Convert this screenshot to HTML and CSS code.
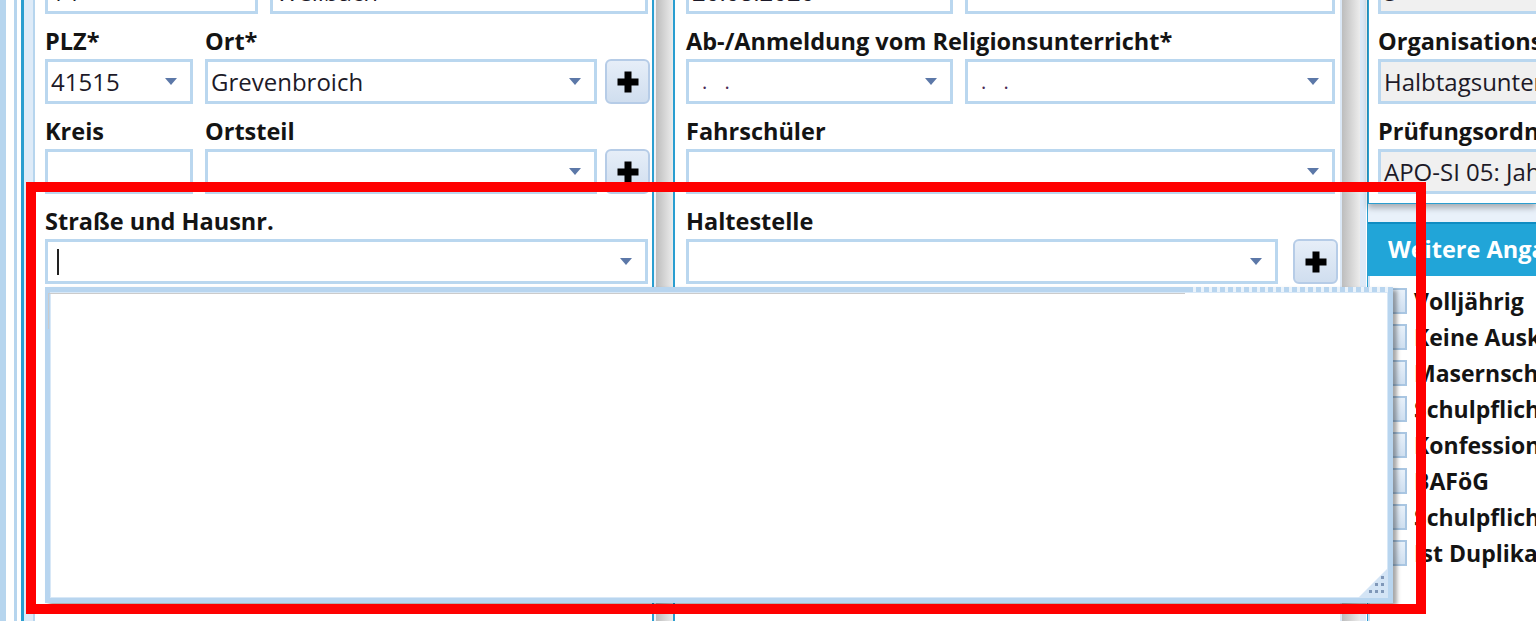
FILE: index.html
```html
<!DOCTYPE html>
<html lang="de">
<head>
<meta charset="utf-8">
<title>Schüler</title>
<link rel="stylesheet" href="styles.css">
</head>
<body>
<div class="app">
  <div class="edge"></div>

  <div class="panel left">
    <div class="stack">
      <div class="row">
        <div class="field w213"><span class="val">14</span></div>
        <div class="field w378"><span class="val">Weilbach</span></div>
      </div>
      <div class="lblrow"><span class="lbl w148">PLZ*</span><span class="lbl">Ort*</span></div>
      <div class="row">
        <div class="field w148"><span class="val">41515</span><i class="arrow"></i></div>
        <div class="field w392"><span class="val">Grevenbroich</span><i class="arrow"></i></div>
        <button class="plus"><svg viewBox="0 0 24 24" width="24" height="24"><path d="M8.5 1.5h7v7h7v7h-7v7h-7v-7h-7v-7h7z"/></svg></button>
      </div>
      <div class="lblrow"><span class="lbl w148">Kreis</span><span class="lbl">Ortsteil</span></div>
      <div class="row">
        <div class="field w148"></div>
        <div class="field w392"><i class="arrow"></i></div>
        <button class="plus"><svg viewBox="0 0 24 24" width="24" height="24"><path d="M8.5 1.5h7v7h7v7h-7v7h-7v-7h-7v-7h7z"/></svg></button>
      </div>
      <div class="lblrow"><span class="lbl">Straße und Hausnr.</span></div>
      <div class="row">
        <div class="field w603"><span class="caret"></span><i class="arrow"></i></div>
      </div>
    </div>
  </div>

  <div class="sep"></div>

  <div class="panel mid">
    <div class="stack">
      <div class="row">
        <div class="field w267"><span class="val">20.08.2020</span></div>
        <div class="field w370"><span class="val dots">. .</span></div>
      </div>
      <div class="lblrow"><span class="lbl">Ab-/Anmeldung vom Religionsunterricht*</span></div>
      <div class="row">
        <div class="field w267"><span class="val dots">. .</span><i class="arrow"></i></div>
        <div class="field w370"><span class="val dots">. .</span><i class="arrow"></i></div>
      </div>
      <div class="lblrow"><span class="lbl">Fahrschüler</span></div>
      <div class="row">
        <div class="field w649"><i class="arrow"></i></div>
      </div>
      <div class="lblrow"><span class="lbl">Haltestelle</span></div>
      <div class="row">
        <div class="field w592"><i class="arrow"></i></div>
        <button class="plus plus-r"><svg viewBox="0 0 24 24" width="24" height="24"><path d="M8.5 1.5h7v7h7v7h-7v7h-7v-7h-7v-7h7z"/></svg></button>
      </div>
    </div>
  </div>

  <div class="sep2"></div>

  <div class="panel right">
    <div class="rbox">
      <div class="row">
        <div class="field ro wfull"><span class="val">5</span></div>
      </div>
      <div class="lblrow"><span class="lbl">Organisationsform</span></div>
      <div class="row">
        <div class="field ro wfull"><span class="val">Halbtagsunterricht</span></div>
      </div>
      <div class="lblrow"><span class="lbl">Prüfungsordnung</span></div>
      <div class="row">
        <div class="field ro wfull"><span class="val">APO-SI 05: Jahrgang</span></div>
      </div>
    </div>
    <div class="rhead">Weitere Angaben</div>
    <ul class="checks">
      <li><span class="box"></span>Volljährig</li>
      <li><span class="box"></span>Keine Auskunft</li>
      <li><span class="box"></span>Masernschutz</li>
      <li><span class="box"></span>Schulpflicht</li>
      <li><span class="box"></span>Konfession</li>
      <li><span class="box"></span>BAFöG</li>
      <li><span class="box"></span>Schulpflicht</li>
      <li><span class="box"></span>Ist Duplikat</li>
    </ul>
  </div>
</div>

<div class="popup">
  <div class="ptex"></div>
  <div class="pitem"></div>
  <svg class="grip" viewBox="0 0 30 30" width="30" height="30">
    <path d="M30 0V30H0Z" fill="#d3e4f5"/>
    <g fill="#7f97b8">
      <rect x="23" y="8" width="3" height="3"/>
      <rect x="17" y="15" width="3" height="3"/>
      <rect x="23" y="15" width="3" height="3"/>
      <rect x="11" y="22" width="3" height="3"/>
      <rect x="17" y="22" width="3" height="3"/>
      <rect x="23" y="22" width="3" height="3"/>
    </g>
  </svg>
</div>

<div class="mark"></div>
</body>
</html>
```

FILE: styles.css
```css
* { box-sizing: border-box; }

body {
  margin: 0;
  width: 1536px;
  height: 621px;
  overflow: hidden;
  position: relative;
  background: #fff;
  font-family: "Open Sans", "Noto Sans", "DejaVu Sans", sans-serif;
  color: #141414;
}

.app {
  display: flex;
  height: 621px;
}

.edge {
  flex: none;
  width: 35px;
  background: linear-gradient(to right,
    #b6d5ee 0 6px, #fff 6px 14px, #b6d5ee 14px 17px, #fff 17px 21px,
    #2a9ed0 21px 24px, #deebf8 24px 33px, #b6d5ee 33px 35px);
}

.panel {
  flex: none;
  background: #fff;
}
.panel.left { width: 617px; padding-left: 10px; }
.panel.mid { width: 664px; padding-left: 10px; }
.panel.right {
  width: 168px;
  background: #e9f1fa;
  display: flex;
  flex-direction: column;
}

.sep {
  flex: none;
  width: 24px;
  background: linear-gradient(to right,
    #2a9ed0 0 2px, #eef3f9 2px 4px, #bdbdbd 4px, #ececec 21px,
    #2a9ed0 21px 23px, #fff 23px 24px);
}
.sep2 {
  flex: none;
  width: 28px;
  background: linear-gradient(to right,
    #dbe8f6 0 2px, #bdbdbd 2px, #ececec 20px,
    #dde9f7 20px 26px, #fff 26px 27px, #2a9ed0 27px 28px);
}

.stack {
  margin-top: -31px;
  display: flex;
  flex-direction: column;
}

.row {
  display: flex;
  gap: 12px;
  height: 45px;
}

.lblrow {
  display: flex;
  gap: 12px;
  height: 45px;
  padding-top: 13px;
}

.lbl {
  font-size: 23.5px;
  font-weight: 700;
  line-height: 28px;
  white-space: nowrap;
}

.field {
  flex: none;
  height: 45px;
  border: 3px solid #bad7ef;
  background: #fff;
  display: flex;
  align-items: center;
  padding-left: 3px;
  padding-right: 13px;
}
.field.ro { background: #f0f0f0; }

.w148 { width: 148px; }
.w213 { width: 213px; }
.w378 { width: 378px; }
.w392 { width: 392px; }
.w603 { width: 603px; }
.w267 { width: 267px; }
.w370 { width: 370px; }
.w592 { width: 592px; }
.w649 { width: 649px; }
.wfull { width: 170px; }

.lbl.w148 { flex: none; }

.val {
  font-size: 24px;
  line-height: 28px;
  color: #1d1a28;
  white-space: nowrap;
}
.val.dots {
  font-size: 20px;
  letter-spacing: 6px;
  padding-left: 10px;
  color: #4a2a55;
}

.caret {
  width: 2px;
  height: 26px;
  background: #222;
  margin-left: 6px;
}

.arrow {
  margin-left: auto;
  width: 0;
  height: 0;
  border-left: 6px solid transparent;
  border-right: 6px solid transparent;
  border-top: 7px solid #5c78a8;
}

.plus {
  flex: none;
  width: 45px;
  height: 45px;
  margin-left: -4px;
  padding: 0;
  border: 2px solid #b6cce7;
  border-radius: 6px;
  background: linear-gradient(#e6eef8, #d0deef);
  display: flex;
  align-items: center;
  justify-content: center;
}
.plus svg { fill: #000; }
.plus.plus-r { margin-left: 3px; }

.rbox {
  margin-top: -31px;
  background: #fff;
  border-left: 1px solid #2a9ed0;
  border-bottom: 1px solid #2a9ed0;
  padding: 0 0 9px 9px;
  box-shadow: 0 4px 6px rgba(0, 0, 0, 0.28);
  overflow: hidden;
}

.rhead {
  margin-top: 18px;
  height: 54px;
  background: #21a5d8;
  border-top: 2px solid #0f8cc2;
  color: #fff;
  font-size: 23.5px;
  font-weight: 700;
  padding-left: 20px;
  line-height: 50px;
  white-space: nowrap;
}

.checks {
  list-style: none;
  margin: 0;
  padding: 7px 0 0 0;
  flex: 1;
  background: #fff;
  border-left: 2px solid #cfe2f4;
}
.checks li {
  height: 36px;
  display: flex;
  align-items: center;
  gap: 7px;
  padding-left: 15px;
  font-size: 23px;
  font-weight: 700;
  white-space: nowrap;
}
.box {
  flex: none;
  width: 22px;
  height: 26px;
  border: 2px solid #a9c6e2;
  background: linear-gradient(#e8f1fa, #cfdff0);
}

.popup {
  position: absolute;
  left: 45px;
  top: 287px;
  width: 1348px;
  height: 316px;
  border: 5px solid #b8d5ef;
  background: #fff;
  box-shadow: inset 0 0 0 1px #d8e8f7, 4px 3px 4px rgba(0, 0, 0, 0.35);
  display: flex;
  flex-direction: column;
}
.ptex {
  position: absolute;
  top: -5px;
  right: 0;
  width: 200px;
  height: 5px;
  background: repeating-linear-gradient(to right, #b8d5ef 0 5px, #eaf3fb 5px 8px);
}
.pitem {
  width: 1137px;
  height: 36px;
  margin: 1px 0 0 -2px;
  border-top: 1px solid #cbcbcb;
  border-left: 1px solid #cbcbcb;
}
.grip {
  margin-top: auto;
  align-self: flex-end;
}

.mark {
  position: absolute;
  left: 26px;
  top: 182px;
  width: 1400px;
  height: 432px;
  border: 10px solid #ff0000;
}
```
